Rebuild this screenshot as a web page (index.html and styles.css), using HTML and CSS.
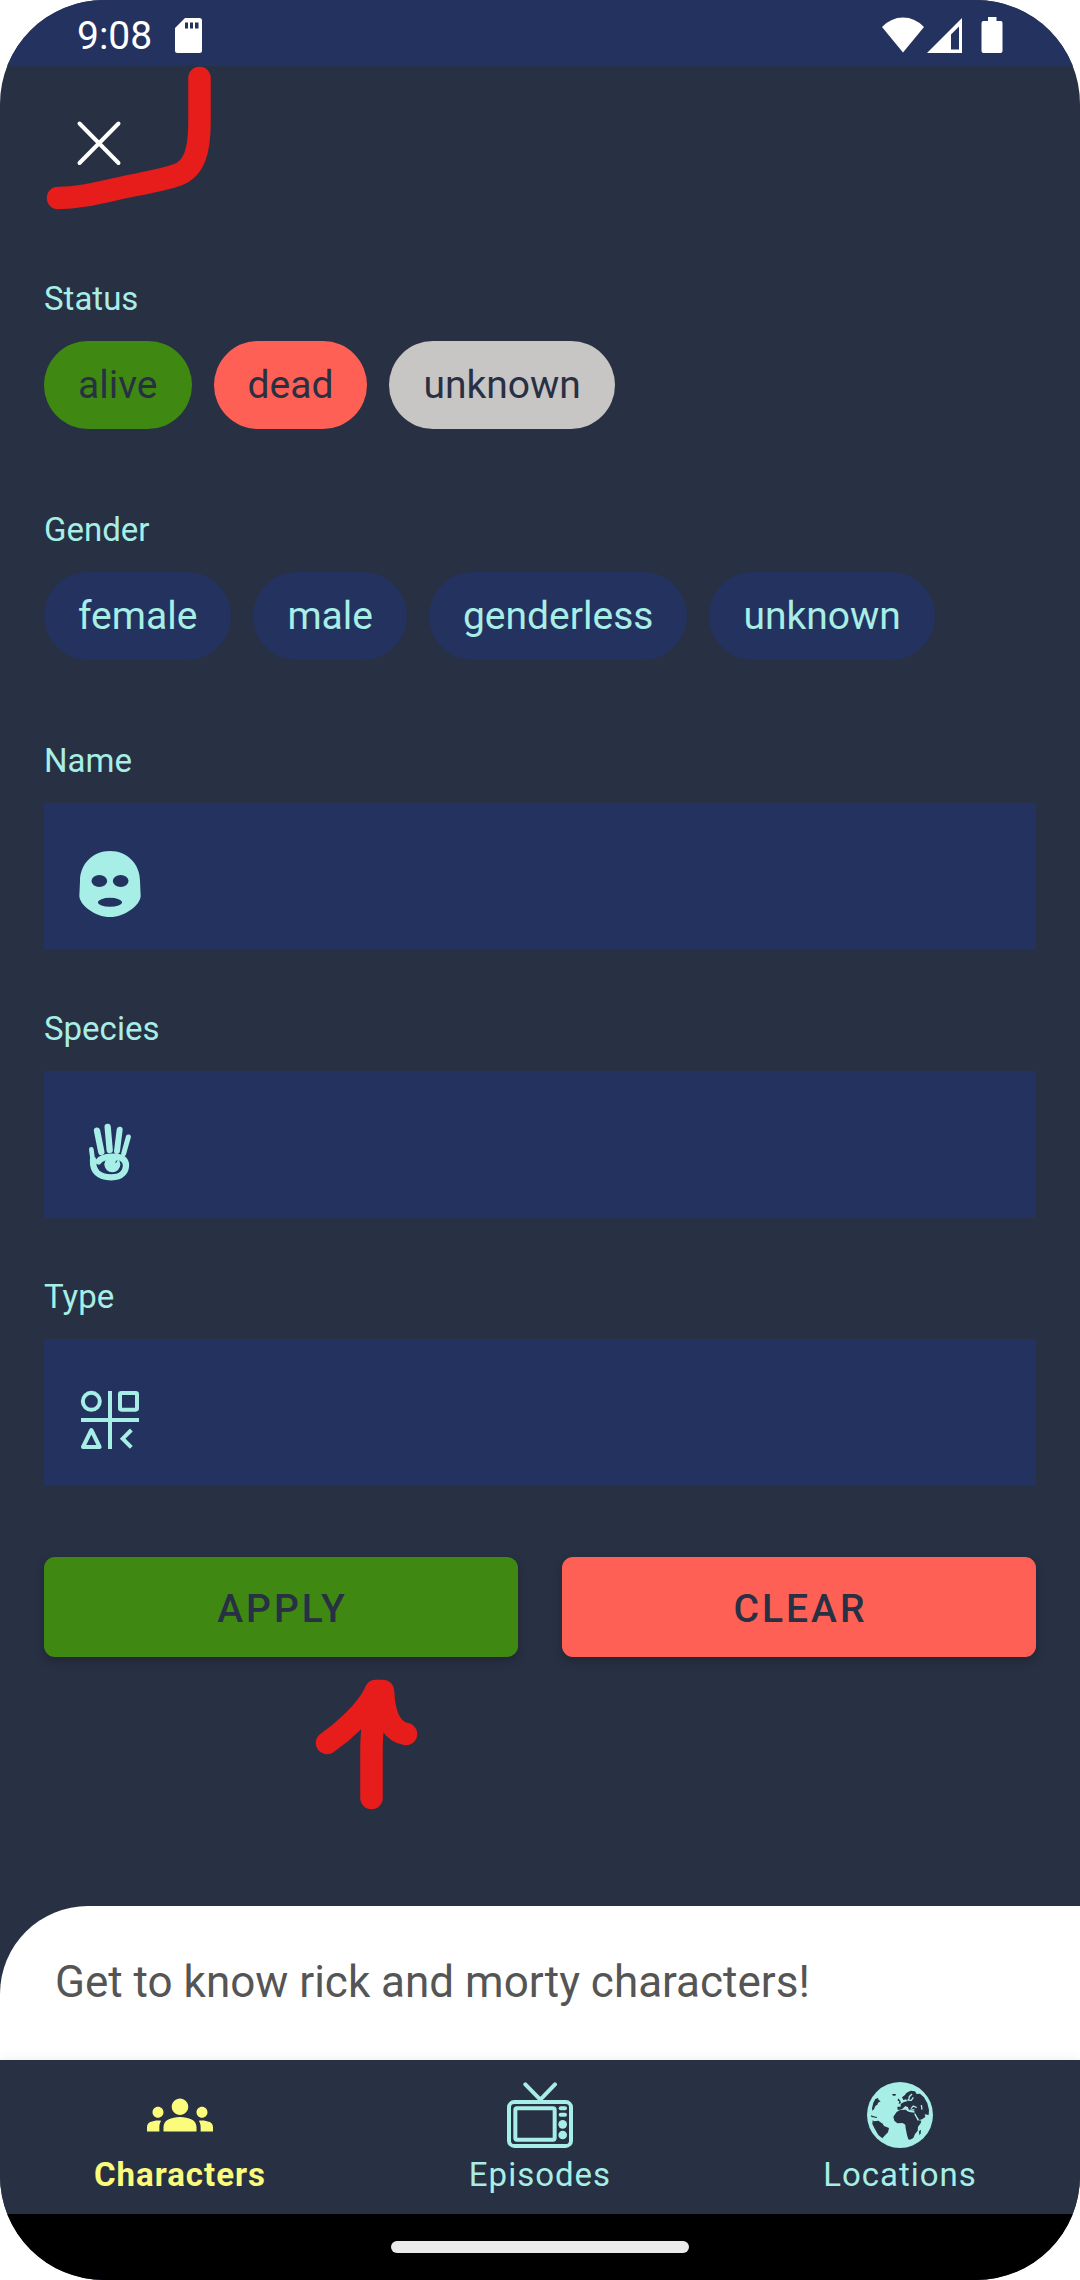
FILE: index.html
```html
<!DOCTYPE html>
<html lang="en">
<head>
<meta charset="utf-8">
<meta name="viewport" content="width=device-width, initial-scale=1">
<title>Character filters</title>
<link rel="stylesheet" href="styles.css">
</head>
<body>
<div class="screen">
  <div class="statusbar">
    <span class="clock">9:08</span>
    <svg class="sd" viewBox="0 0 27 35" aria-hidden="true"><path fill="#fff" fill-rule="evenodd" d="M10 0H24.500Q27 0 27 2.500V32.500Q27 35 24.500 35H2.500Q0 35 0 32.500V10ZM10 4.500V10.500H13V4.500ZM15 4.500V10.500H18V4.500ZM20 4.500V10.500H23.500V4.500Z"/></svg>
    <span class="signals">
      <svg width="42" height="36" viewBox="0 0 42 36" aria-hidden="true"><path fill="#fff" d="M21 35.500L0 10Q9 .5 21 .5T42 10Z"/></svg>
      <svg width="35" height="36" viewBox="0 0 35 36" aria-hidden="true"><path fill="#fff" fill-rule="evenodd" d="M35 1V36H0ZM32 9.500L24 17.500V32.500H32Z"/></svg>
      <svg class="battery" width="22" height="36" viewBox="0 0 22 36" aria-hidden="true"><path fill="#fff" d="M7 0H15.500V4H20Q21.500 4 21.500 6V34Q21.500 36 19.500 36H2.500Q.5 36 .5 34V6Q.5 4 2.500 4H7Z"/></svg>
    </span>
  </div>

  <header class="header">
    <button class="close" type="button" aria-label="Close">
      <svg viewBox="0 0 66 66" aria-hidden="true"><path d="M13.500 13.500L52.500 53M52.500 13.500L13.500 53" fill="none" stroke="#fff" stroke-width="4" stroke-linecap="round"/></svg>
    </button>
    <svg class="mark mark-close" viewBox="40 66 180 150" aria-hidden="true"><path d="M199.500 78V122C199.500 149 195 169 177 175C160 181 138 184 116 189C94 194 77 198 58 198"/></svg>
  </header>

  <main class="content">
    <form class="filters">
      <div class="group" role="group" aria-labelledby="status-label">
        <span class="label" id="status-label">Status</span>
        <div class="chips">
          <button class="chip chip-alive" type="button">alive</button>
          <button class="chip chip-dead" type="button">dead</button>
          <button class="chip chip-unknown" type="button">unknown</button>
        </div>
      </div>
      <div class="group" role="group" aria-labelledby="gender-label">
        <span class="label" id="gender-label">Gender</span>
        <div class="chips">
          <button class="chip" type="button">female</button>
          <button class="chip" type="button">male</button>
          <button class="chip" type="button">genderless</button>
          <button class="chip" type="button">unknown</button>
        </div>
      </div>

      <div class="fields">
        <div class="field">
          <label class="label" for="name">Name</label>
          <div class="box">
            <svg class="icon" viewBox="141 363 198 198" aria-hidden="true"><path fill="currentColor" d="M240 363C292 363 330 402 330 453L332 497C332 524 285 561 240 561S148 524 148 497L150 453C150 402 188 363 240 363Z"/><g fill="#24325f"><ellipse cx="208" cy="453" rx="23.500" ry="18"/><ellipse cx="272" cy="453" rx="23.500" ry="18"/><ellipse cx="240" cy="517" rx="36" ry="13.500"/></g></svg>
            <input class="input" id="name" type="text">
          </div>
        </div>
        <div class="field">
          <label class="label" for="species">Species</label>
          <div class="box">
            <svg class="icon" viewBox="141 357 198 198" aria-hidden="true"><g fill="none" stroke="currentColor" stroke-linecap="round"><path stroke-width="19" d="M201 392L214 456M233 381L239 450"/><path stroke-width="18" d="M269 389L261 453"/><path stroke-width="15" d="M295 411L281 461"/><path stroke-width="14" d="M184 448L189 485"/><path stroke-width="19" d="M189 480C188 512 203 532 244 532C277 532 288 513 288 494C286 473 265 469 245 470C223 471 212 475 206 484"/></g><circle cx="247" cy="493" r="24" fill="currentColor"/><path d="M256 488Q256 482 263 480L258 489Z" fill="#24325f"/></svg>
            <input class="input" id="species" type="text">
          </div>
        </div>
        <div class="field">
          <label class="label" for="type">Type</label>
          <div class="box">
            <svg class="icon" viewBox="141 351 198 198" aria-hidden="true"><g fill="none" stroke="currentColor" stroke-width="12"><circle cx="184" cy="394" r="25.500"/><rect x="270" y="369" width="51" height="50" rx="4"/><path d="M240 363V537M153 450H327"/><path stroke-linejoin="round" d="M184 480L209 531H159Z"/><path d="M304 480L278 506L304 532"/></g></svg>
            <input class="input" id="type" type="text">
          </div>
        </div>
      </div>

      <div class="actions">
        <button class="action action-apply" type="submit">APPLY</button>
        <button class="action action-clear" type="reset">CLEAR</button>
        <svg class="mark mark-apply" viewBox="310 1675 110 140" aria-hidden="true"><path d="M371.500 1798V1750C371.500 1725 375 1712 376 1691M327 1743C343 1732 366 1712 376 1691H383C384 1712 389 1731 406 1734"/><path d="M376 1691L380 1715"/></svg>
      </div>
    </form>
  </main>

  <div class="hint">Get to know rick and morty characters!</div>

  <nav class="nav">
    <a class="tab tab-active" href="#characters" aria-current="page">
      <svg class="icon" viewBox="0 0 24 24" aria-hidden="true"><path fill="currentColor" d="M12 12.750c1.630 0 3.070.39 4.240.9 1.080.48 1.760 1.560 1.760 2.730V18H6v-1.610c0-1.180.68-2.260 1.760-2.730 1.170-.52 2.610-.91 4.240-.91zM4 13c1.100 0 2-.9 2-2s-.9-2-2-2-2 .9-2 2 .9 2 2 2zm1.130 1.100c-.37-.06-.74-.1-1.130-.1-.99 0-1.930.21-2.780.58C.48 14.900 0 15.620 0 16.430V18h4.500v-1.610c0-.83.23-1.610.63-2.290zM20 13c1.100 0 2-.9 2-2s-.9-2-2-2-2 .9-2 2 .9 2 2 2zm4 3.430c0-.81-.48-1.530-1.220-1.850-.85-.37-1.790-.58-2.780-.58-.39 0-.76.04-1.130.1.4.68.63 1.460.63 2.290V18H24v-1.570zM12 6c1.660 0 3 1.340 3 3s-1.340 3-3 3-3-1.340-3-3 1.340-3 3-3z"/></svg>
      <span>Characters</span>
    </a>
    <a class="tab" href="#episodes">
      <svg class="icon" viewBox="201 66 198 198" aria-hidden="true"><g fill="none" stroke="currentColor"><rect x="207" y="126" width="186" height="132" rx="16" stroke-width="12"/><rect x="226" y="145" width="118" height="94" rx="5" stroke-width="12"/><path stroke-width="12" stroke-linecap="round" d="M256 73L301 119L345 73"/></g><g fill="currentColor"><rect x="356" y="139" width="25" height="12" rx="6"/><rect x="356" y="158" width="25" height="12" rx="6"/><circle cx="368" cy="193" r="13"/><circle cx="368" cy="225" r="13"/></g></svg>
      <span>Episodes</span>
    </a>
    <a class="tab" href="#locations">
      <svg class="icon" viewBox="201 66 198 198" aria-hidden="true"><circle cx="300" cy="165" r="99" fill="currentColor"/><g fill="#283043"><path d="M290 156L300 150L318 149L322 154L332 157L344 158L350 172L356 181L364 182L362 190L354 200L353 212L345 222L340 234L330 239L325 238L321 225L317 205L316 194L308 189L292 190L283 182L280 170Z"/><path d="M218 181L222 184L235 182L248 191L252 198L267 204L264 217L258 223L247 235L235 225L225 208L217 192Z"/><path d="M226 117L234 114L236 120L242 124L234 128L232 134L226 138L222 148L217 152L216 145L220 128Z"/><path d="M213 166L221 169L231 171V174L214 171Z"/><path d="M276 102H288L286 107H279Z"/><path d="M306 112L314 106L320 98L332 92L345 94L350 102L360 101L372 112L382 130L387 150L386 165L374 163L376 171L366 178L358 180L350 170L344 160L343 152L327 151L324 142L316 138L306 148L293 150L292 140L302 140V132L312 126L322 124L318 118L310 120Z"/><path d="M294 115L300 121L303 129L296 132L298 124L293 122Z"/><path d="M357 214L363 209L362 220L358 226Z"/></g><path fill="none" stroke="currentColor" stroke-width="4" d="M326 120L328 110L336 102M322 120L334 121L340 112M344 161L355 181M333 146L340 138L350 143M364 135L366 149M328 151L343 149"/></svg>
      <span>Locations</span>
    </a>
  </nav>
  <div class="gesture"><span class="handle"></span></div>
</div>
</body>
</html>
```

FILE: styles.css
```css
:root {
  --bg: #283043;
  --navy: #24325f;
  --mint: #a6eee6;
  --green: #3f8912;
  --coral: #ff6055;
}

* { box-sizing: border-box; }

body {
  margin: 0;
  background: #fff;
  font-family: Roboto, sans-serif;
}

button, input {
  margin: 0;
  border: 0;
  font: inherit;
}

svg { display: block; flex: none; }

.screen {
  display: flex;
  flex-direction: column;
  min-height: 100vh;
  overflow: hidden;
  border-radius: 104px;
  background: var(--bg);
  color: var(--mint);
}

.statusbar {
  display: flex;
  align-items: center;
  height: 66px;
  padding: 4px 77px 0;
  background: var(--navy);
  color: #fff;
}

.clock { padding-top: 2px; font-size: 39px; line-height: 46px; }
.sd { width: 27px; height: 35px; margin-left: 23px; }
.signals { display: flex; gap: 3px; margin-left: auto; }
.battery { margin-left: 16px; }

.header {
  position: relative;
  padding: 44px 66px 101px;
}

.close {
  display: block;
  width: 66px;
  height: 66px;
  padding: 0;
  background: none;
}

.mark {
  position: absolute;
  fill: none;
  stroke: #e71d1c;
  stroke-width: 22.5px;
  stroke-linecap: round;
  stroke-linejoin: round;
}

.mark-close { top: 0; left: 40px; width: 180px; height: 150px; }
.mark-apply { top: 118px; left: 266px; width: 110px; height: 140px; }

.content { flex: 1; padding: 0 44px; }

.group { margin-bottom: 79px; }

.label {
  display: block;
  margin-bottom: 20px;
  font-size: 33px;
  line-height: 44px;
}

.chips { display: flex; flex-wrap: wrap; gap: 22px; }

.chip {
  height: 88px;
  padding: 0 34px;
  border-radius: 44px;
  background: var(--navy);
  color: var(--mint);
  font-size: 39px;
}

.chip-alive { background: var(--green); color: var(--bg); }
.chip-dead { background: var(--coral); color: var(--bg); }
.chip-unknown { background: #c8c5c5; color: var(--bg); }

.fields { display: grid; gap: 57px; }

.box {
  display: flex;
  align-items: center;
  gap: 33px;
  height: 147px;
  padding: 15px 33px 0;
  background: var(--navy);
}

.icon { width: 66px; height: 66px; }

.input {
  flex: 1;
  min-width: 0;
  height: 88px;
  padding: 0;
  outline: 0;
  background: none;
  color: var(--mint);
  font-size: 44px;
}

.actions {
  position: relative;
  display: flex;
  gap: 44px;
  margin-top: 71px;
}

.action {
  flex: 1;
  height: 100px;
  padding: 4px 0 0 3px;
  border-radius: 11px;
  box-shadow: 0 4px 8px rgba(20, 20, 35, 0.35);
  color: var(--bg);
  font-size: 39px;
  font-weight: 500;
  letter-spacing: 3px;
}

.action-apply { background: var(--green); }
.action-clear { background: var(--coral); }

.hint {
  padding: 50px 55px 52px;
  border-top-left-radius: 88px;
  background: #fff;
  color: #555;
  font-size: 44px;
  line-height: 52px;
}

.nav {
  display: grid;
  grid-template-columns: repeat(3, 1fr);
  height: 154px;
  background: var(--bg);
  box-shadow: 0 -2px 10px rgba(0, 0, 0, 0.06);
}

.tab {
  display: flex;
  flex-direction: column;
  align-items: center;
  gap: 5px;
  padding-top: 22px;
  color: var(--mint);
  font-size: 33px;
  line-height: 44px;
  letter-spacing: 1px;
  text-decoration: none;
}

.tab-active { color: #fbfc7c; font-weight: 700; }

.gesture {
  display: flex;
  align-items: center;
  justify-content: center;
  height: 66px;
  background: #000;
}

.handle {
  width: 298px;
  height: 12px;
  border-radius: 6px;
  background: #ebebeb;
}
```
